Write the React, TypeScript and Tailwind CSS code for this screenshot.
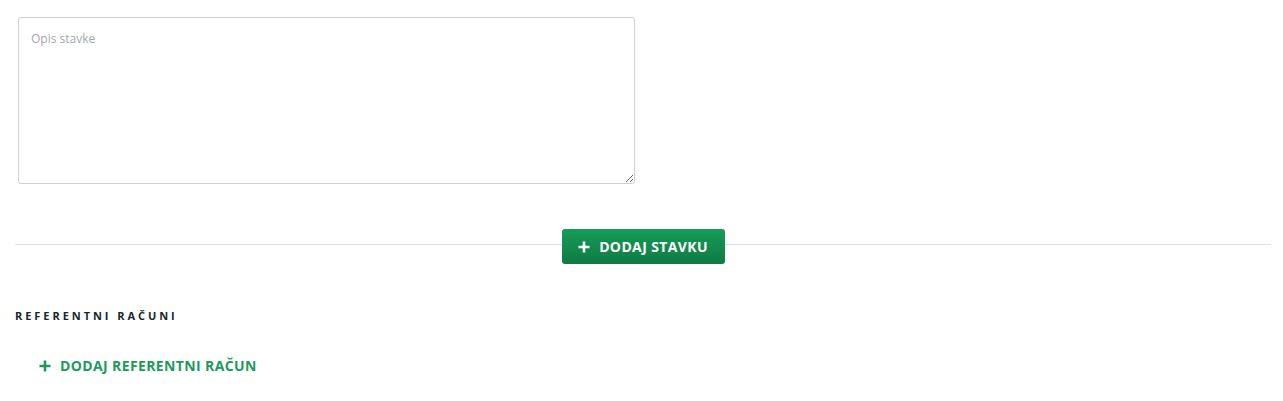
export default function App() {
  return (
    <div className="w-[1283px] h-[401px] bg-white font-['Open_Sans',sans-serif] relative">
      <div className="pt-[17px] pl-[18px]">
        <textarea
          placeholder="Opis stavke"
          className="block w-[617px] h-[167px] border border-[#cfcfcf] rounded-[3px] px-[12px] py-[12px] text-[12px] text-[#333] placeholder:text-[#a3a8b0] outline-none"
        />
      </div>

      <div className="relative mt-[45px] ml-[15px] mr-[12px] h-[35px] flex items-center justify-center">
        <div className="absolute left-0 right-0 top-[15px] h-px bg-[#e0e0e0]" />
        <button className="relative z-10 h-[35px] w-[163px] rounded-[3px] bg-gradient-to-b from-[#169b58] to-[#0f7b44] text-white text-[14px] font-bold flex items-center justify-center gap-[9px] tracking-[0.37px]">
          <svg width="12" height="12" viewBox="0 0 12 12">
            <path d="M6 0.5v11M0.5 6h11" stroke="white" strokeWidth="2.6" />
          </svg>
          DODAJ STAVKU
        </button>
      </div>

      <div className="mt-[44px] pl-[15px] text-[11px] font-bold tracking-[2.95px] text-[#13282b] leading-[16px]">
        REFERENTNI RAČUNI
      </div>

      <div className="mt-[32px] pl-[39px] flex items-center gap-[9px] text-[14px] font-bold text-[#1c9a5b] leading-[19px] tracking-[0.38px]">
        <svg width="12" height="12" viewBox="0 0 12 12">
          <path d="M6 0.5v11M0.5 6h11" stroke="#1c9a5b" strokeWidth="2.6" />
        </svg>
        DODAJ REFERENTNI RAČUN
      </div>
    </div>
  );
}
